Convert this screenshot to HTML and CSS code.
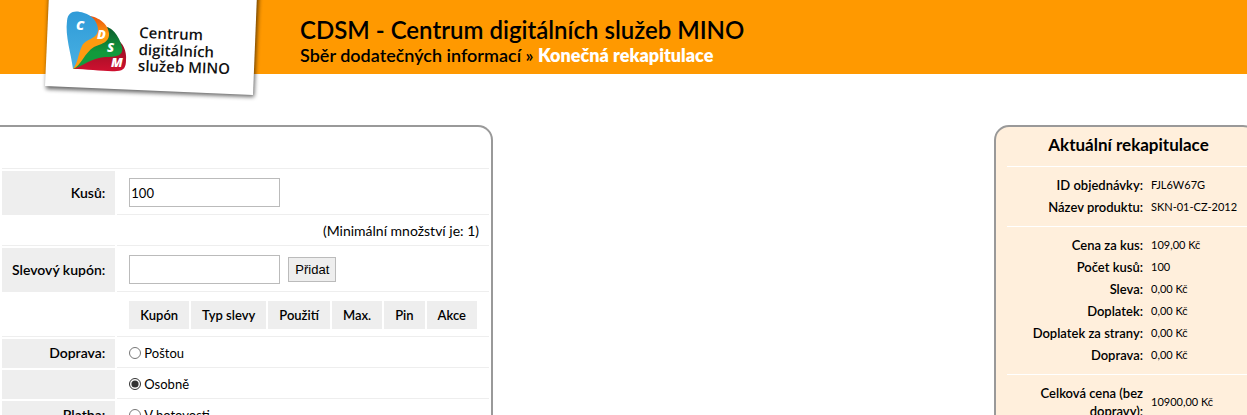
FILE: index.html
```html
<!DOCTYPE html>
<html lang="cs">
<head>
<meta charset="utf-8">
<title>CDSM - Centrum digitálních služeb MINO</title>
<link rel="stylesheet" href="styles.css">
</head>
<body>
<header class="header">
  <svg class="logo" width="224" height="104" viewBox="0 0 224 104" role="img" aria-label="Centrum digitálních služeb MINO">
    <defs>
      <filter id="shadow" x="-10%" y="-10%" width="120%" height="125%"><feGaussianBlur stdDeviation="2"/></filter>
      <linearGradient id="blue" x1="0" y1="0" x2="0" y2="1"><stop offset="0" stop-color="#2f9bd8"/><stop offset="1" stop-color="#49b0e2"/></linearGradient>
      <linearGradient id="orange" x1="0" y1="0" x2="0" y2="1"><stop offset="0" stop-color="#e8500c"/><stop offset=".35" stop-color="#ff9a10"/></linearGradient>
      <linearGradient id="green" x1="0" y1="0" x2="0" y2="1"><stop offset="0" stop-color="#0b5a2c"/><stop offset=".6" stop-color="#129a3c"/></linearGradient>
      <linearGradient id="red" x1="0" y1="0" x2="0" y2="1"><stop offset="0" stop-color="#8c1020"/><stop offset="1" stop-color="#cf1030"/></linearGradient>
    </defs>
    <path d="M8-6 L218-6 L213 97 L5 89 Z" fill="#000" opacity=".6" filter="url(#shadow)"/>
    <path d="M8-6 L216-6 L212 95 L4 86 Z" fill="#fff"/>
    <path d="M32 69 L75 40 C82 41 86 52 85 60 C85 67 83 71 76 71 C66 72 46 69 32 69Z" fill="url(#red)"/>
    <path d="M32 69 L62 27 C71 25 79 38 81 47 C83 56 75 57 64 57 C50 58 42 66 32 69Z" fill="url(#green)"/>
    <path d="M32 69 L42 16 C53 14 67 22 68 33 C69 43 59 44 53 47 C44 52 40 66 32 69Z" fill="url(#orange)"/>
    <path d="M32 69 C30 53 24 36 26 21 C27 11 34 10 43 13 C51 15 57 22 57 30 C56 40 45 38 41 46 C37 54 37 63 32 69Z" fill="url(#blue)"/>
    <g class="logo-letters" fill="#fff">
      <text x="35" y="30">C</text><text x="56" y="39">D</text><text x="66" y="52">S</text><text x="70" y="67">M</text>
    </g>
    <g class="logo-name" transform="translate(98 38) rotate(2)">
      <text x="0" y="0">Centrum</text><text x="0" y="17">digitálních</text><text x="0" y="33">služeb MINO</text>
    </g>
  </svg>
  <div class="heading">
    <h1>CDSM - Centrum digitálních služeb MINO</h1>
    <p class="steps">Sběr dodatečných informací » <strong>Konečná rekapitulace</strong></p>
  </div>
</header>
<main class="content">
  <form class="panel order">
    <table class="form-table">
      <tbody>
        <tr class="intro"><td colspan="2"></td></tr>
        <tr class="tall"><th scope="row"><label for="pieces">Kusů:</label></th><td><input class="text" id="pieces" type="text" value="100"></td></tr>
        <tr><td></td><td class="note">(Minimální množství je: 1)</td></tr>
        <tr class="tall"><th scope="row"><label for="coupon">Slevový kupón:</label></th><td><div class="coupon-entry"><input class="text" id="coupon" type="text"><button class="add" type="button">Přidat</button></div></td></tr>
        <tr class="coupons"><td></td><td>
          <table class="coupon-table"><thead><tr><th>Kupón</th><th>Typ slevy</th><th>Použití</th><th>Max.</th><th>Pin</th><th>Akce</th></tr></thead></table>
        </td></tr>
        <tr><th scope="row">Doprava:</th><td><label class="option"><input type="radio" name="delivery">Poštou</label></td></tr>
        <tr><th></th><td><label class="option"><input type="radio" name="delivery" checked>Osobně</label></td></tr>
        <tr><th scope="row">Platba:</th><td><label class="option"><input type="radio" name="payment">V hotovosti</label></td></tr>
      </tbody>
    </table>
  </form>
  <aside class="panel summary">
    <h2>Aktuální rekapitulace</h2>
    <dl>
      <div><dt>ID objednávky:</dt><dd>FJL6W67G</dd></div>
      <div><dt>Název produktu:</dt><dd>SKN-01-CZ-2012</dd></div>
    </dl>
    <dl>
      <div><dt>Cena za kus:</dt><dd>109,00 Kč</dd></div>
      <div><dt>Počet kusů:</dt><dd>100</dd></div>
      <div><dt>Sleva:</dt><dd>0,00 Kč</dd></div>
      <div><dt>Doplatek:</dt><dd>0,00 Kč</dd></div>
      <div><dt>Doplatek za strany:</dt><dd>0,00 Kč</dd></div>
      <div><dt>Doprava:</dt><dd>0,00 Kč</dd></div>
    </dl>
    <dl>
      <div><dt>Celková cena (bez dopravy):</dt><dd>10900,00 Kč</dd></div>
    </dl>
  </aside>
</main>
</body>
</html>
```
FILE: styles.css
```css
* { box-sizing: border-box; }
body {
  margin: 0;
  height: 100vh;
  overflow: hidden;
  background: #fff;
  color: #000;
  font: 13px/18px "Trebuchet MS", Lato, sans-serif;
}
.header {
  position: relative;
  height: 74px;
  padding: 14px 0 0 300px;
  background: #ff9900;
}
.logo {
  position: absolute;
  top: 0;
  left: 41px;
}
.logo-letters { font: italic 800 13px "Open Sans", sans-serif; }
.logo-name { font: 600 15px "Open Sans", sans-serif; fill: #111; }
h1, h2, p, dl, dd { margin: 0; }
h1 { font-size: 24px; line-height: 32px; font-weight: 600; }
.steps { font-size: 18px; line-height: 19px; font-weight: 600; }
.steps strong { color: #fff; font-weight: 800; }

.content {
  display: flex;
  justify-content: space-between;
  align-items: stretch;
  padding-top: 51px;
}
.panel { border: 2px solid #999; }
.order {
  flex: 0 1 493px;
  border-left: 0;
  border-radius: 0 15px 0 0;
  padding: 0 0 10px;
}
.form-table { width: 100%; border-spacing: 2px; }
.form-table > tbody > tr > th,
.form-table > tbody > tr > td {
  height: 29px;
  padding: 0 10px;
  border-bottom: 1px solid #eee;
}
.form-table > tbody > .intro > td { height: 40px; }
.form-table > tbody > .tall > * { height: 44px; }
.form-table > tbody > .coupons > * { height: 43px; }
.form-table th { font-weight: 600; background: #eee; white-space: nowrap; }
.form-table > tbody > tr > th { width: 113px; font-size: 14px; text-align: right; }
.form-table > tbody > tr > th + td { padding-left: 12px; }
.form-table > tbody > tr > .note { font-size: 14px; text-align: right; }
.text {
  display: block;
  width: 151px;
  height: 29px;
  padding: 1px;
  border: 1px solid #bbb;
  background: #fff;
  font: inherit;
}
.coupon-entry { display: flex; align-items: center; gap: 8px; }
.add {
  height: 25px;
  padding: 0 6px;
  border: 1px solid #bbb;
  background: #eee;
  font: 13px "Liberation Sans", Arial, sans-serif;
}
.coupon-table { border-spacing: 2px; }
.coupon-table th { height: 28px; padding: 0 11px; }
.option { display: flex; align-items: center; gap: 3px; }
.option input { width: 12px; height: 12px; margin: 0; accent-color: #333; }

.summary {
  flex: 0 0 264px;
  margin-right: -11px;
  padding: 0 6px 10px 11px;
  border-radius: 15px;
  background: #ffefdc;
}
h2 { padding: 8px 0 11px; font-size: 17px; line-height: 20px; font-weight: 700; text-align: center; }
.summary dl { padding: 7px 0 8px; border-top: 1px solid #fff; }
.summary dl > div {
  display: grid;
  grid-template-columns: 136px 1fr;
  column-gap: 8px;
  align-items: center;
  padding: 2px 0;
}
dt { text-align: right; font-weight: 600; }
dd { font-size: 11px; }
```
